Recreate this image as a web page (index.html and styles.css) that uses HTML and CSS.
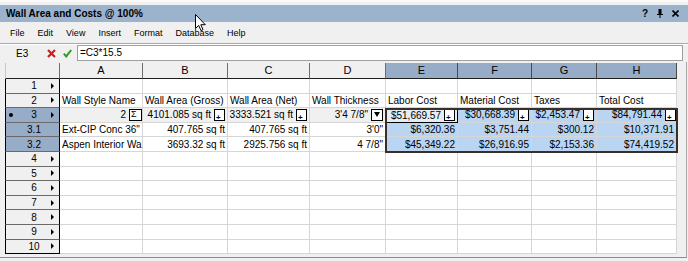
FILE: index.html
```html
<!DOCTYPE html>
<html>
<head>
    <meta charset="UTF-8">
    <title>Wall Area and Costs @ 100%</title>
    <link rel="stylesheet" href="styles.css">
</head>
<body>
<div class="window">
    <div class="titlebar">
        <span class="title">Wall Area and Costs @ 100%</span>
        <div class="wbtns">
            <span>?</span>
            <svg width="6" height="9" viewBox="0 0 6 9"><path d="M1.5 0h3v5h1.5v1h-2.5v3h-1v-3h-2.5v-1h1.5z" fill="#000"/></svg>
            <svg width="7" height="7" viewBox="0 0 7 7"><path d="M0.5 0.5l6 6M6.5 0.5l-6 6" stroke="#000" stroke-width="1.6"/></svg>
        </div>
    </div>

    <div class="menubar">
        <span>File</span>
        <span>Edit</span>
        <span>View</span>
        <span>Insert</span>
        <span>Format</span>
        <span>Database</span>
        <span>Help</span>
    </div>

    <div class="formulabar">
        <span class="cellref">E3</span>
        <svg class="fbtn" width="9" height="9" viewBox="0 0 9 9"><path d="M1 1l7 7M8 1l-7 7" stroke="#c8201c" stroke-width="2.2"/></svg>
        <svg class="fbtn" width="9" height="9" viewBox="0 0 9 9"><path d="M0.8 4.6l2.4 2.8l5-6.4" stroke="#2c9a22" stroke-width="2" fill="none"/></svg>
        <div class="formula">=C3*15.5</div>
    </div>

    <div class="sheetwrap">
        <div class="sheet">
            <!-- column headers -->
            <div class="c ch corner"></div>
            <div class="c ch">A</div>
            <div class="c ch">B</div>
            <div class="c ch">C</div>
            <div class="c ch">D</div>
            <div class="c ch sel">E</div>
            <div class="c ch sel">F</div>
            <div class="c ch sel">G</div>
            <div class="c ch sel">H</div>

            <!-- row 1 -->
            <div class="c rh"><span></span><span class="n">1</span><span class="tri"></span></div>
            <div class="c"></div><div class="c"></div><div class="c"></div><div class="c"></div>
            <div class="c"></div><div class="c"></div><div class="c"></div><div class="c"></div>

            <!-- row 2 -->
            <div class="c rh"><span></span><span class="n">2</span><span class="tri"></span></div>
            <div class="c">Wall Style Name</div>
            <div class="c">Wall Area (Gross)</div>
            <div class="c">Wall Area (Net)</div>
            <div class="c">Wall Thickness</div>
            <div class="c">Labor Cost</div>
            <div class="c">Material Cost</div>
            <div class="c">Taxes</div>
            <div class="c">Total Cost</div>

            <!-- row 3 (summary) -->
            <div class="c rh sel"><span class="dot"></span><span class="n">3</span><span class="tri"></span></div>
            <div class="c cur r"><span>2</span><span class="btn sum">Σ</span></div>
            <div class="c cur r"><span>4101.085 sq ft</span><span class="btn add">+</span></div>
            <div class="c cur r"><span>3333.521 sq ft</span><span class="btn add">+</span></div>
            <div class="c cur r"><span>3'4 7/8"</span><span class="btn dd"></span></div>
            <div class="c active r"><span>$51,669.57</span><span class="btn add">+</span></div>
            <div class="c hl r"><span>$30,668.39</span><span class="btn add">+</span></div>
            <div class="c hl r"><span>$2,453.47</span><span class="btn add">+</span></div>
            <div class="c hl r"><span>$84,791.44</span><span class="btn add edge">+</span></div>

            <!-- row 3.1 -->
            <div class="c rh sel"><span></span><span class="n">3.1</span><span></span></div>
            <div class="c">Ext-CIP Conc 36"</div>
            <div class="c r">407.765 sq ft</div>
            <div class="c r">407.765 sq ft</div>
            <div class="c r">3'0"</div>
            <div class="c hl r">$6,320.36</div>
            <div class="c hl r">$3,751.44</div>
            <div class="c hl r">$300.12</div>
            <div class="c hl r">$10,371.91</div>

            <!-- row 3.2 -->
            <div class="c rh sel"><span></span><span class="n">3.2</span><span></span></div>
            <div class="c">Aspen Interior Wa</div>
            <div class="c r">3693.32 sq ft</div>
            <div class="c r">2925.756 sq ft</div>
            <div class="c r">4 7/8"</div>
            <div class="c hl r">$45,349.22</div>
            <div class="c hl r">$26,916.95</div>
            <div class="c hl r">$2,153.36</div>
            <div class="c hl r">$74,419.52</div>

            <!-- rows 4 - 10 -->
            <div class="c rh"><span></span><span class="n">4</span><span class="tri"></span></div>
            <div class="c"></div><div class="c"></div><div class="c"></div><div class="c"></div>
            <div class="c"></div><div class="c"></div><div class="c"></div><div class="c"></div>
            <div class="c rh"><span></span><span class="n">5</span><span class="tri"></span></div>
            <div class="c"></div><div class="c"></div><div class="c"></div><div class="c"></div>
            <div class="c"></div><div class="c"></div><div class="c"></div><div class="c"></div>
            <div class="c rh"><span></span><span class="n">6</span><span class="tri"></span></div>
            <div class="c"></div><div class="c"></div><div class="c"></div><div class="c"></div>
            <div class="c"></div><div class="c"></div><div class="c"></div><div class="c"></div>
            <div class="c rh"><span></span><span class="n">7</span><span class="tri"></span></div>
            <div class="c"></div><div class="c"></div><div class="c"></div><div class="c"></div>
            <div class="c"></div><div class="c"></div><div class="c"></div><div class="c"></div>
            <div class="c rh"><span></span><span class="n">8</span><span class="tri"></span></div>
            <div class="c"></div><div class="c"></div><div class="c"></div><div class="c"></div>
            <div class="c"></div><div class="c"></div><div class="c"></div><div class="c"></div>
            <div class="c rh"><span></span><span class="n">9</span><span class="tri"></span></div>
            <div class="c"></div><div class="c"></div><div class="c"></div><div class="c"></div>
            <div class="c"></div><div class="c"></div><div class="c"></div><div class="c"></div>
            <div class="c rh last"><span></span><span class="n">10</span><span class="tri"></span></div>
            <div class="c"></div><div class="c"></div><div class="c"></div><div class="c"></div>
            <div class="c"></div><div class="c"></div><div class="c"></div><div class="c"></div>

            <div class="selframe"></div>
        </div>
    </div>

    <svg class="cursor" width="12" height="18" viewBox="0 0 12 18">
        <path d="M0.5 0.5v14l3.2-3.1l2.3 5.2l2-0.9l-2.2-5h4.5z" fill="#fff" stroke="#000" stroke-width="1"/>
    </svg>
</div>
</body>
</html>
```

FILE: styles.css
```css
* {
    box-sizing: border-box;
}

body {
    margin: 0;
    font-family: "Liberation Sans", Arial, sans-serif;
    font-size: 10px;
    color: #000;
    background: #fff;
}

.window {
    position: relative;
    width: 688px;
    height: 261px;
    padding-top: 5px;
    background: #f0f0f0;
    border-top: 2px solid #fafafa;
    overflow: hidden;
}

.titlebar {
    display: flex;
    align-items: center;
    height: 17px;
    margin-top: -2px;
    padding: 0 9px 0 6px;
    background: #9cb3cd;
}

.title {
    font-weight: bold;
    font-size: 10px;
}

.wbtns {
    display: flex;
    align-items: center;
    gap: 9px;
    margin-left: auto;
    font-weight: bold;
    font-size: 10px;
}

.menubar {
    display: flex;
    align-items: center;
    gap: 13px;
    height: 21px;
    padding-left: 10px;
    font-size: 9px;
}

.formulabar {
    display: flex;
    align-items: center;
    height: 19px;
    border-top: 1px solid #a9a9a9;
    box-shadow: inset 0 1px 0 #fff;
}

.cellref {
    width: 31px;
    margin-left: 16px;
}

.fbtn {
    margin-right: 7px;
}

.formula {
    flex: 1;
    height: 16px;
    margin: 0 5px 0 -2px;
    padding-left: 2px;
    line-height: 14px;
    background: #fff;
    border: 1px solid #a0a0a0;
}

.sheetwrap {
    height: 196px;
    padding: 1px 0 0 5px;
    border-right: 1px solid #a8a8a8;
    border-bottom: 1px solid #8c8c8c;
    width: 687px;
}

.sheet {
    position: relative;
    display: grid;
    grid-template-columns: 55px 83px 85px 82px 76px 72px 74px 65px 80px;
    grid-template-rows: 16px;
    grid-auto-rows: 14.6px;
    width: 672px;
    background: #fff;
}

.c {
    display: flex;
    align-items: center;
    padding: 0 2px;
    overflow: hidden;
    white-space: nowrap;
    line-height: 13px;
    border-right: 1px solid #d6d6d6;
    border-bottom: 1px solid #d6d6d6;
}

.r {
    justify-content: flex-end;
}

.ch {
    justify-content: center;
    font-size: 11px;
    background: #f0f0f0;
    border-right: 1px solid #6e6e6e;
    border-bottom: 1px solid #1e1e1e;
}

.ch.corner {
    border-left: 1px solid #c8c8c8;
}

.ch.sel {
    background: #97acc6;
    border-right-color: #4a4a4a;
}

.rh {
    display: grid;
    grid-template-columns: 8px 1fr 5px;
    align-items: center;
    padding: 0 3px;
    background: #f0f0f0;
    border-left: 1px solid #000;
    border-right: 1px solid #000;
    border-bottom: 1px solid #6a6a6a;
}

.rh.last {
    border-bottom-color: #000;
}

.rh.sel {
    background: #97acc6;
}

.rh .n {
    text-align: center;
}

.tri {
    width: 0;
    height: 0;
    border-left: 3px solid #000;
    border-top: 3px solid transparent;
    border-bottom: 3px solid transparent;
}

.dot {
    width: 4px;
    height: 4px;
    border-radius: 50%;
    background: #000;
}

.cur {
    background: #f0f0f0;
}

.hl {
    background: #b9d5f1;
}

.active {
    background: #e4ecf4;
    border: 1px solid #000;
}

.btn {
    position: relative;
    flex: none;
    width: 11px;
    height: 12px;
    margin-left: 3px;
    background: #fff;
    border: 1px solid #000;
    font-size: 8px;
    line-height: 8px;
    padding-left: 1px;
}

.btn.add {
    padding-top: 4px;
    font-weight: bold;
}

.btn.sum {
    width: 13px;
    margin-right: -2px;
    padding-top: 0;
    font-size: 9px;
    line-height: 9px;
}

.btn.edge {
    margin-right: -2px;
}

.btn.dd {
    width: 12px;
    display: flex;
    align-items: center;
    justify-content: center;
    padding: 0;
}

.btn.dd::before {
    content: "";
    border-top: 5px solid #000;
    border-left: 3px solid transparent;
    border-right: 3px solid transparent;
}

.selframe {
    position: absolute;
    left: 380px;
    top: 45px;
    width: 293px;
    height: 45px;
    border: 2px solid #3a2f26;
    pointer-events: none;
}

.cursor {
    position: absolute;
    left: 195px;
    top: 12px;
}
```
